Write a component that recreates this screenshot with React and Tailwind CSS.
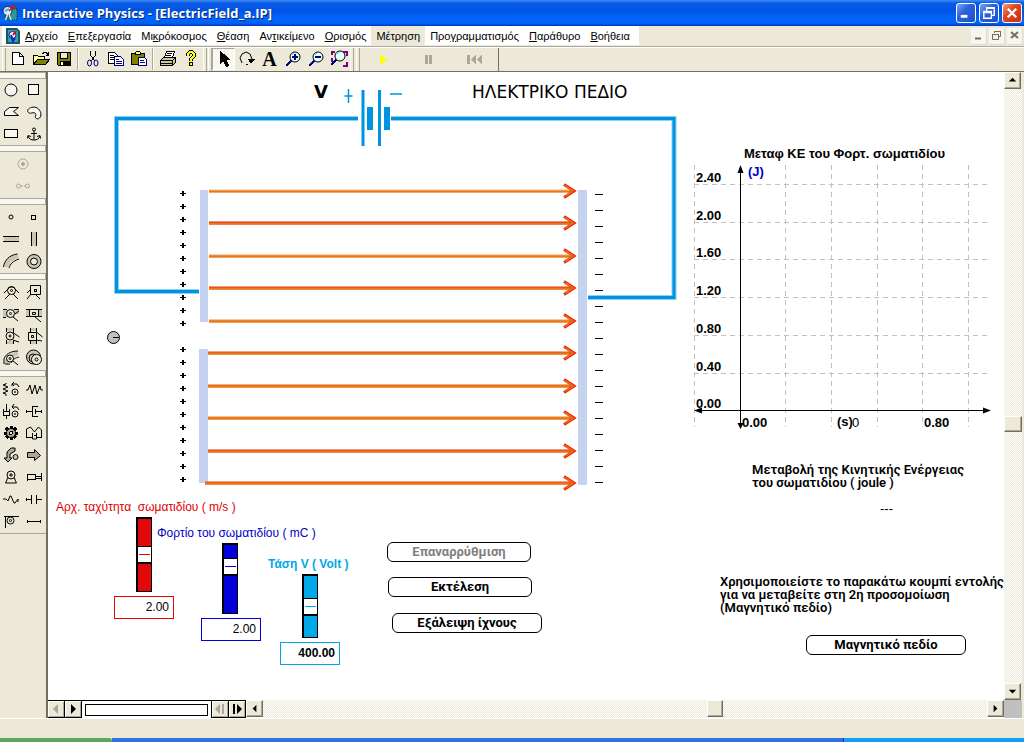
import React, { useState } from 'react';
import clsx from 'clsx';

// [before, access key, after]
const menuItems = [
    ['', 'Α', 'ρχείο'],
    ['', 'Ε', 'πεξεργασία'],
    ['Μι', 'κ', 'ρόκοσμος'],
    ['', 'Θ', 'έαση'],
    ['Αν', 'τ', 'ικείμενο'],
    ['', 'Ο', 'ρισμός'],
    ['Μέτρηση', '', ''],
    ['Προ', 'γ', 'ραμματισμός'],
    ['', 'Π', 'αράθυρο'],
    ['', 'Β', 'οήθεια'],
];

const checker = 'bg-[repeating-conic-gradient(#ffffff_0_25%,#ece9d8_0_50%)] bg-[length:2px_2px]';
const raised = 'bg-[#ece9d8] border border-t-white border-l-white border-r-[#716f64] border-b-[#716f64] shadow-[inset_-1px_-1px_0_#aca899]';

const Icon = ({ size = 20, children, color = '#000' }) => (
    <svg
        width={size}
        height={size}
        viewBox={`0 0 ${size} ${size}`}
        fill="none"
        stroke={color}
        shapeRendering="crispEdges"
        aria-hidden="true"
        className="shrink-0"
    >
        {children}
    </svg>
);

const AppLogo = () => (
    <svg width="16" height="16" viewBox="0 0 16 16" aria-hidden="true" className="shrink-0">
        <rect x="2" y="2" width="13" height="13" fill="#0d6a80" />
        <path d="M10 4h5v11H8" fill="#2e9a96" stroke="#062b3d" strokeDasharray="1 1" />
        <circle cx="5.500" cy="6" r="4.500" fill="#d8ecff" stroke="#0a2a5a" />
        <path d="M7 6l5-5M9 1h3v3" stroke="#e01010" strokeWidth="1.500" fill="none" />
        <path d="M5.500 10l-2 5M7 9l2 6" stroke="#d6e7ee" strokeWidth="1.500" />
        <path d="M3 6l4-2" stroke="#5fa0e8" strokeWidth="2" />
    </svg>
);

const DocLogo = () => (
    <svg width="14" height="16" viewBox="0 0 14 16" aria-hidden="true" className="shrink-0">
        <path d="M0 0h11l3 3v13H0z" fill="#0c5f66" />
        <path d="M1.500 1.500h9l2 2v11h-11z" fill="#3b9ea0" stroke="#053a44" strokeDasharray="1 1" />
        <circle cx="6.500" cy="7" r="3.500" fill="#f2f8ff" stroke="#0a22a8" />
        <path d="M7 7l3-4" stroke="#e01010" strokeWidth="2" />
        <path d="M5 7l2 6 2-3" stroke="#0a22c8" strokeWidth="2" fill="none" />
    </svg>
);

/* ---------- toolbar ---------- */

const lens = (
    <>
        <circle cx="11" cy="7" r="5" fill="#e6ffff" shapeRendering="auto" />
        <path d="M7 11l-5 5" stroke="#00007f" strokeWidth="2" />
        <path d="M8 5l2-2" stroke="#00ffff" />
    </>
);

const fileTools = [
    { name: 'New', icon: <path d="M4.500 3.500h7l4 4v8h-11zM11.500 3.500v4h4" fill="#fff" /> },
    {
        name: 'Open',
        icon: (
            <>
                <path d="M2.500 15.500v-9h4l1 1h6v3" fill="#ffff99" />
                <path d="M2.500 15.500l4-5h12l-4 5z" fill="#808000" />
                <path d="M11 4.500h1l1-1h2l2 2M17.500 3v3h-3" />
            </>
        ),
    },
    {
        name: 'Save',
        icon: (
            <>
                <path d="M3.500 3.500h13v13h-12l-1-1z" fill="#808000" />
                <path d="M6.500 3.500h7v6h-7z" fill="#ece9d8" />
                <path d="M6 12h9v4H6z" fill="#000" />
                <path d="M7.500 13v3" stroke="#fff" strokeWidth="2" />
            </>
        ),
    },
    null,
    {
        name: 'Cut',
        icon: (
            <>
                <path d="M7.500 2v4l4 6M12.500 2v4l-4 6" />
                <ellipse cx="6.500" cy="14" rx="2" ry="3" stroke="#00007f" shapeRendering="auto" />
                <ellipse cx="13" cy="14" rx="2" ry="3" stroke="#00007f" shapeRendering="auto" />
            </>
        ),
    },
    {
        name: 'Copy',
        icon: (
            <>
                <path d="M2.500 3.500h6l3 3v8h-9z" fill="#fff" />
                <path d="M4 6.500h4M4 8.500h5M4 10.500h5" />
                <path d="M8.500 7.500h6l3 3v6h-9z" fill="#fff" stroke="#00007f" />
                <path d="M10 10.500h3M10 12.500h6M10 14.500h6" stroke="#00007f" />
            </>
        ),
    },
    {
        name: 'Paste',
        icon: (
            <>
                <path d="M2.500 4.500h13v11h-13z" fill="#808000" />
                <path d="M6.500 5.500v-2l1-1h3l1 1v2z" fill="#ffff66" />
                <path d="M9.500 8.500h6l2 2v6h-8z" fill="#fff" stroke="#00007f" />
                <path d="M11 11.500h4M11 13.500h5" stroke="#00007f" />
            </>
        ),
    },
    null,
    {
        name: 'Print',
        icon: (
            <>
                <path d="M6.500 8.500l2-6h8l-2 6z" fill="#fff" />
                <path d="M9 4.500h5M8 6.500h5" />
                <path d="M2.500 11.500l3-3h12v5l-3 3h-12z" fill="#c9c6b4" />
                <path d="M2.500 11.500h12l3-3M14.500 11.500v5M3 14.500h11" />
                <path d="M10 13h3" stroke="#d8d800" strokeWidth="1" />
            </>
        ),
    },
    {
        name: 'Help',
        icon: (
            <>
                <path d="M7 7V5l2-2h2l2 2v2l-3 3v2" stroke="#000" strokeWidth="4" />
                <path d="M7 7V5l2-2h2l2 2v2l-3 3v2" stroke="#ffff00" strokeWidth="2" />
                <path d="M8.500 13.500h3v3h-3z" fill="#ffff00" />
            </>
        ),
    },
];

const canvasTools = [
    { name: 'Select', active: true, icon: <path d="M6.500 2.500v12l3-3 3 6 2-1-3-6h4z" fill="#000" /> },
    {
        name: 'Rotate',
        icon: (
            <>
                <path d="M5 14L3 9l2-4 4-2 4 2 2 5" shapeRendering="auto" />
                <path d="M11 10h7l-4 5z" fill="#000" stroke="none" />
                <path d="M9 15.500h2" />
            </>
        ),
    },
    { name: 'Text', label: 'A' },
    { name: 'Zoom in', icon: <g transform="translate(1 1)">{lens}<path d="M8 7h6M11 4v6" stroke="#00007f" strokeWidth="2" /></g> },
    { name: 'Zoom out', icon: <g transform="translate(1 1)">{lens}<path d="M8 7h6" stroke="#00007f" strokeWidth="2" /></g> },
    {
        name: 'Zoom to fit',
        icon: (
            <g>
                {lens}
                <path d="M3 6V3h3M14 3h4v4M18 13v4h-4M3 13V9" stroke="#7f007f" strokeWidth="2" />
            </g>
        ),
    },
];

const playerTools = [
    { name: 'Run', icon: <path d="M7 6v9l8-4.500z" fill="#ffff00" stroke="none" /> },
    { name: 'Pause', icon: <path d="M6 6h3v9H6zM10 6h3v9h-3z" fill="#aca899" stroke="none" /> },
    { name: 'Reset', icon: <path d="M2 6h3v9H2zM11 6v9l-5-4.500zM17 6v9l-5-4.500z" fill="#aca899" stroke="none" /> },
];

const Grip = () => <div className="w-1 self-stretch border-l border-r border-l-white border-r-[#aca899]" />;

const ToolButton = ({ tool, wide }) => (
    <button
        type="button"
        aria-label={tool.name}
        className={clsx(
            'flex h-[22px] items-center justify-center',
            wide ? 'w-[46px]' : 'w-[23px]',
            tool.active && 'border border-t-[#aca899] border-l-[#aca899] border-r-white border-b-white bg-[#f8f7f1]'
        )}
    >
        {tool.label ? (
            <span className="font-['Liberation_Serif',serif] text-xl leading-5 font-bold">{tool.label}</span>
        ) : (
            <Icon>{tool.icon}</Icon>
        )}
    </button>
);

const Toolbar = () => (
    <div className="flex h-[25px] items-start border-t border-b border-t-white border-b-[#716f64] pl-[2px]">
        <Grip />
        {fileTools.map((tool, i) =>
            tool ? (
                <ToolButton key={tool.name} tool={tool} />
            ) : (
                <div key={i} className="mx-[2px] h-[22px] w-[2px] border-l border-r border-l-[#aca899] border-r-white" />
            )
        )}
        <div className="ml-px flex gap-px self-stretch">
            <Grip />
            <Grip />
        </div>
        {canvasTools.map((tool) => (
            <ToolButton key={tool.name} tool={tool} />
        ))}
        <div className="flex gap-[2px] self-stretch">
            <Grip />
            <Grip />
        </div>
        <div className="flex self-stretch border-r border-r-[#716f64]">
            {playerTools.map((tool) => (
                <ToolButton key={tool.name} tool={tool} wide />
            ))}
        </div>
    </div>
);

/* ---------- left palette ---------- */

const grey = '#c9c6b8';

const palette = [
    {
        pad: '',
        tools: [
            ['Circle', <circle cx="10" cy="10" r="6" fill="#f8f7f1" shapeRendering="auto" />],
            ['Square', <path d="M4.500 4.500h10v10h-10z" fill="#f8f7f1" />],
            ['Polygon', <path d="M17.500 5.500h-9l-5 4v4h14l-5-4z" fill="#f8f7f1" shapeRendering="auto" />],
            ['Curved body', <path d="M7.500 11c-3 1-5-2-3-4s7-3 10 0 3 7 1 9-5 0-4-2 0-4-4-3z" fill="#f8f7f1" shapeRendering="auto" />],
            ['Rectangle', <path d="M3.500 5.500h13v8h-13z" fill="#f8f7f1" />],
            [
                'Anchor',
                <g shapeRendering="auto">
                    <circle cx="10" cy="5.500" r="1.500" />
                    <path d="M10 7v9M7 9.500h6M4 12c1 3 3 4 6 4s5-1 6-4M3.500 14.500l.500-3 3 1M16.500 14.500l-.500-3-3 1" />
                </g>,
            ],
        ],
    },
    {
        pad: 'py-px',
        single: true,
        tools: [
            [
                'Join',
                <g stroke="#aca899" shapeRendering="auto">
                    <circle cx="10" cy="10" r="5" />
                    <circle cx="10" cy="10" r="1.500" fill="#aca899" />
                </g>,
            ],
            [
                'Split',
                <g stroke="#aca899" shapeRendering="auto">
                    <circle cx="5.500" cy="10" r="2" />
                    <circle cx="14.500" cy="10" r="2" />
                    <path d="M8 10h5" strokeDasharray="2 1" />
                </g>,
            ],
        ],
    },
    {
        pad: 'py-px',
        tools: [
            ['Point element', <circle cx="10" cy="10" r="2" shapeRendering="auto" />],
            ['Square point', <path d="M7.500 8.500h4v4h-4z" />],
            ['Horizontal slot', <><path d="M3 8h15v4H3z" fill={grey} stroke="none" /><path d="M2 7.500h16M2 12.500h16" /></>],
            ['Vertical slot', <><path d="M8 3h4v14H8z" fill={grey} stroke="none" /><path d="M7.500 3v14M12.500 3v14" /></>],
            [
                'Curved slot',
                <g shapeRendering="auto">
                    <path d="M5 16c1-6 5-9 12-11" stroke={grey} strokeWidth="4" />
                    <path d="M2.500 16c1-7 6-12 14-13M8 17c1-4 4-7 10-9" />
                </g>,
            ],
            [
                'Closed slot',
                <g shapeRendering="auto">
                    <circle cx="10" cy="10.500" r="7" fill={grey} />
                    <circle cx="10" cy="10.500" r="3.500" fill="#ece9d8" />
                </g>,
            ],
        ],
    },
    {
        pad: 'py-px',
        tools: [
            ['Pin joint', <g shapeRendering="auto"><path d="M3 11L9 5h3l6 6M9 12l-5 5M12 12l5 5" /><circle cx="10.500" cy="8.500" r="4" /><circle cx="10.500" cy="8.500" r="1" /></g>],
            ['Rigid joint', <g><path d="M6.500 3.500h10v9h-10zM3 11l3-3M7 12l-4 5M11 12l5 5" shapeRendering="auto" /><path d="M10.500 7.500h2v2h-2z" /></g>],
            ['Pin on slot', <g shapeRendering="auto"><path d="M2 6h4v7H2zM14 6h4v4h-4z" fill={grey} stroke="none" /><path d="M2 5.500h4M13 5.500h5M2 13.500h3M12 13l5 4M14 10l4-3" /><circle cx="9.500" cy="9.500" r="4" /><circle cx="9.500" cy="9.500" r="1" /></g>],
            ['Keyed slot', <g><path d="M2 6h4v6H2zM15 6h3v6h-3z" fill={grey} stroke="none" /><path d="M2 5.500h16M2 12.500h3M5.500 5.500h9v7h-9zM8.500 8.500h3v2h-3zM11 13l6 5M15 12.500h3" shapeRendering="auto" /></g>],
            ['Pin on vertical slot', <g shapeRendering="auto"><path d="M6 2h6v3H6zM6 15h6v3H6z" fill={grey} stroke="none" /><path d="M5.500 2v4M12.500 2v5l6 4M5.500 14v4M12.500 14v4M12 14l6 2" /><circle cx="9" cy="10" r="4" /><circle cx="9" cy="10" r="1" /></g>],
            ['Keyed vertical slot', <g><path d="M7 2h5v3H7zM7 15h5v3H7z" fill={grey} stroke="none" /><path d="M6.500 2v4M12.500 2v4l6 5M6.500 15v3M12.500 15v3M12 14l6 1M4.500 6.500h8v8h-8zM7.500 9.500h2v2h-2z" shapeRendering="auto" /></g>],
            ['Curved slot joint', <g shapeRendering="auto"><path d="M5 16c1-6 5-9 12-11" stroke={grey} strokeWidth="4" /><path d="M3 16v-5c1-4 6-8 14-8M10 15c2-4 4-5 8-6M12 13l5 4M4 16h5" /><circle cx="9" cy="10.500" r="3.500" fill="#ece9d8" /><circle cx="9" cy="10.500" r="1" /></g>],
            ['Closed slot joint', <g shapeRendering="auto"><circle cx="9.500" cy="9" r="7" fill={grey} /><circle cx="9" cy="10" r="4" /><circle cx="12.500" cy="11.500" r="5" fill="#ece9d8" /><circle cx="12.500" cy="11.500" r="1.500" /></g>],
        ],
    },
    {
        pad: 'py-px',
        tools: [
            ['Rotational spring', <g shapeRendering="auto"><path d="M5 4v1l-3 1 5 2-5 2 5 2-5 2 3 1v2M11 7V5h5l2 3M13 3l-2 2 2 2" /><circle cx="14" cy="13" r="3" /><circle cx="14" cy="13" r=".500" /></g>],
            ['Spring', <path d="M2 11h2l2-5 2 9 3-9 2 9 3-8 1 4h2" shapeRendering="auto" />],
            ['Rotational damper', <g><path d="M2.500 8v6h6V8M5.500 3v7M3 10.500h5M5.500 14v4" /><g shapeRendering="auto"><path d="M11 6h5l2 3M13 3l-2 3 2 2" /><circle cx="14" cy="13" r="3" /><circle cx="14" cy="13" r=".500" /></g></g>],
            ['Damper', <path d="M3 10.500h5M14 10.500h4M13.500 5.500h-5v10h5M11.500 8v5M12 10.500h2M2.500 9v3M17.500 9v3" />],
            ['Gear', <g><path d="M10 3v14M3 10h14M5 5l10 10M15 5L5 15" strokeWidth="3" /><circle cx="10" cy="10" r="4.500" fill="#aca899" shapeRendering="auto" /><circle cx="10" cy="10" r="1.500" fill="#ece9d8" /></g>],
            ['Spring damper', <path d="M2.500 15V6l4-2 4 5 4-5 3 3v8M2 14.500h6M13 14.500h5M8.500 10v6h4v-6M10 12.500h2" shapeRendering="auto" />],
            ['Torque', <g shapeRendering="auto"><path d="M14 3h-4L6 7v6H3l4 4 4-4H9V9l5-3z" fill="#aca899" /><circle cx="14.500" cy="12" r="2.500" fill="#c9c6b8" /></g>],
            ['Force', <path d="M3.500 7.500h7v-3l6 6-6 5v-3h-7z" fill="#aca899" shapeRendering="auto" />],
            ['Motor', <g shapeRendering="auto"><circle cx="10" cy="8" r="4" /><path d="M10 6v4M8 8h4M6.500 11l-1 3-1 2h11l-1-2-1-3" /></g>],
            ['Actuator', <path d="M3.500 6.500v7M3.500 7.500h8v5h-8M11.500 9.500h6M11.500 11.500h6M17.500 6v8" strokeWidth="1" />],
            ['Rod', <path d="M2 10h3l2 2 2-5h1l3 7h1l3-4v3" shapeRendering="auto" />],
            ['Separator', <path d="M2 10.500h5M13 10.500h5M7.500 6v9M12.500 6v9M2.500 9v3" />],
            ['Pulley', <g shapeRendering="auto"><path d="M3 5.500h15M4.500 5v12" /><circle cx="9.500" cy="9.500" r="3.500" /><circle cx="9.500" cy="9.500" r="1" /></g>],
            ['Rope', <path d="M3 10.500h14M3.500 9v3M16.500 9v3" />],
        ],
    },
];

const Palette = () => (
    <div className="w-12 shrink-0 border-r-2 border-r-[#716f64] bg-[#ece9d8]">
        {palette.map((section, i) => (
            <div key={i}>
                <div className="h-[7px] border-t border-r border-b border-[#aca899] bg-[#f8f7f1]" />
                <div className={clsx('grid pr-px', section.single ? 'grid-cols-1' : 'grid-cols-2', section.pad)}>
                    {section.tools.map(([name, drawing]) => (
                        <button key={name} type="button" aria-label={name} className="flex h-[22px] items-center justify-center">
                            <Icon>{drawing}</Icon>
                        </button>
                    ))}
                </div>
            </div>
        ))}
        <div className="border-t border-t-[#aca899]" />
    </div>
);

/* ---------- canvas drawings ---------- */

const arrowEdges = ['#f8c08a', '#e02010', '#f0a060', '#e83808', '#f09040', '#e85010', '#e86010', '#f08020', '#e83010', '#f04808'];

const Wire = ({ d }) => (
    <>
        <path d={d} stroke="#8fd0f2" strokeWidth="5" />
        <path d={d} stroke="#0094e0" strokeWidth="3" />
    </>
);

const FieldDrawing = () => (
    <svg
        width="640"
        height="420"
        viewBox="50 80 640 420"
        fill="none"
        aria-hidden="true"
        className="absolute top-2 left-[2px]"
    >
        <Wire d="M358 118.500H116.500V291.500H199" />
        <Wire d="M391 118.500H674V297.500H588" />
        <g stroke="#0094e0">
            <path d="M363 90v56M379.500 90v56" strokeWidth="3" />
            <path d="M370 107v23M387 107v23" strokeWidth="6" />
            <path d="M344.500 96h8M348.500 89v14M390 94h12" strokeWidth="1.500" />
        </g>
        <g fill="#c3d3f0">
            <path d="M200 190h8v132h-8zM199 349h9v134h-9zM578 190h9v295h-9z" />
        </g>
        {arrowEdges.map((edge, i) => {
            const y = Math.floor(191 + i * 32.5);
            const start = i === 9 ? 205 : i > 4 ? 208 : 209;
            return (
                <g key={i}>
                    <path d={`M${start} ${y}H573`} stroke={edge} strokeWidth="3" />
                    <path d={`M${start} ${y + 0.5}H573`} stroke="#e87818" strokeWidth="2" />
                    <path d={`M564 ${y - 6.5}L574 ${y}L564 ${y + 6.5}`} stroke="#f02800" strokeWidth="3" />
                    <path d={`M565 ${y - 5.5}L573 ${y}L565 ${y + 5.5}`} stroke="#e87818" strokeWidth="1.500" />
                </g>
            );
        })}
        <g stroke="#000" shapeRendering="crispEdges">
            {Array.from({ length: 22 }, (_, i) => {
                const y = 193 + i * 13 + (i > 10 ? 13 : 0);
                return (
                    <g key={i}>
                        <path d={`M180 ${y + 0.5}h6`} />
                        <path d={`M183 ${y - 2}v5`} strokeWidth="2" />
                    </g>
                );
            })}
            {Array.from({ length: 19 }, (_, i) => (
                <path key={i} d={`M595 ${194.5 + i * 16}h8`} />
            ))}
        </g>
        <circle cx="113.500" cy="337.500" r="6" fill="#c0c0c0" stroke="#000" />
        <path d="M113 337.500h6" stroke="#000" />
    </svg>
);

const energyTicks = ['2.40', '2.00', '1.60', '1.20', '0.80', '0.40', '0.00'];
const timeGrid = [694.5, 785.5, 831.5, 877.5, 922.5, 968.5];

const EnergyChart = () => (
    <svg
        width="306"
        height="290"
        viewBox="690 144 306 290"
        fill="none"
        aria-label="Kinetic energy chart"
        className="absolute top-[72px] left-[642px] text-[13px] font-bold"
    >
        <g stroke="#c0c0c0" strokeDasharray="5 4" shapeRendering="crispEdges">
            {timeGrid.map((x) => (
                <path key={x} d={`M${x} 165V427`} />
            ))}
            {energyTicks.slice(0, 6).map((tick, i) => (
                <path key={tick} d={`M694 ${Math.round(184 + i * 37.7) + 0.5}H991`} />
            ))}
        </g>
        <path d="M740.500 168V427M697 410.500H989" stroke="#000" shapeRendering="crispEdges" />
        <path d="M740.500 165l3 8h-6zM740.500 429l3-6h-6zM991 410.500l-8-3v6zM694 410.500l8-3v6z" fill="#000" />
        <g fill="#000">
            <text x="744" y="158">Μεταφ ΚΕ του Φορτ. σωματιδίου</text>
            {energyTicks.map((tick, i) => (
                <text key={tick} x="696" y={Math.round(182 + i * 37.7)}>{tick}</text>
            ))}
            <text x="742" y="427">0.00</text>
            <text x="837" y="426">(s)</text>
            <text x="852" y="427" className="font-normal">0</text>
            <text x="924" y="427">0.80</text>
            <text x="748" y="176" fill="#0000d0">(J)</text>
        </g>
    </svg>
);

const controls = [
    {
        id: 'velocity',
        label: 'Αρχ. ταχύτητα  σωματιδίου ( m/s )',
        min: 0,
        max: 4,
        initial: 2,
        labelStyle: 'left-2 top-[427px] text-[#e00000]',
        sliderStyle:
            'left-[88px] top-[445px] h-[75px] bg-[#e00808] [&::-webkit-slider-thumb]:bg-[linear-gradient(#e00808,#e00808)]',
        fieldStyle: 'left-[66px] top-[524px] border-[#e00808]',
    },
    {
        id: 'charge',
        label: 'Φορτίο του σωματιδίου ( mC )',
        min: -1,
        max: 3,
        initial: 2,
        labelStyle: 'left-[109px] top-[453px] text-[#0000c8]',
        sliderStyle:
            'left-[174px] top-[471px] h-[71px] bg-[#0000d8] [&::-webkit-slider-thumb]:bg-[linear-gradient(#0000d8,#0000d8)]',
        fieldStyle: 'left-[153px] top-[546px] border-[#0000d8]',
    },
    {
        id: 'voltage',
        label: 'Τάση V ( Volt )',
        min: 0,
        max: 800,
        initial: 400,
        labelStyle: 'left-[220px] top-[484px] font-bold text-[#00a8e8]',
        sliderStyle:
            'left-[254px] top-[502px] h-[64px] bg-[#00a8e8] [&::-webkit-slider-thumb]:bg-[linear-gradient(#00a8e8,#00a8e8)]',
        fieldStyle: 'left-[232px] top-[570px] border-[#00a8e8] font-bold',
    },
];

const SliderControl = ({ control }) => {
    const [value, setValue] = useState(control.initial);
    return (
        <>
            <label htmlFor={control.id} className={clsx('absolute text-xs leading-4 whitespace-pre', control.labelStyle)}>
                {control.label}
            </label>
            <input
                id={control.id}
                type="range"
                min={control.min}
                max={control.max}
                step="any"
                value={value}
                onChange={(e) => setValue(parseFloat(e.target.value))}
                className={clsx(
                    'absolute w-4 appearance-none border border-t-2 border-l-2 border-black [direction:rtl] [writing-mode:vertical-lr]',
                    '[&::-webkit-slider-thumb]:h-[18px] [&::-webkit-slider-thumb]:w-[13px] [&::-webkit-slider-thumb]:appearance-none',
                    '[&::-webkit-slider-thumb]:border-t [&::-webkit-slider-thumb]:border-b-2 [&::-webkit-slider-thumb]:border-black',
                    '[&::-webkit-slider-thumb]:bg-white [&::-webkit-slider-thumb]:bg-[length:11px_1px] [&::-webkit-slider-thumb]:bg-center [&::-webkit-slider-thumb]:bg-no-repeat',
                    control.sliderStyle
                )}
            />
            <input
                type="text"
                aria-label={control.label}
                value={value.toFixed(2)}
                onChange={(e) => setValue(parseFloat(e.target.value) || 0)}
                className={clsx('absolute h-[23px] w-[60px] border bg-white pr-1 pb-[2px] text-right text-xs text-black', control.fieldStyle)}
            />
        </>
    );
};

const CanvasButton = ({ className, children, ...props }) => (
    <button
        type="button"
        className={clsx(
            'absolute h-5 rounded-md border border-black bg-white font-[Roboto,sans-serif] text-[13px] leading-4 font-bold disabled:text-[#808080]',
            className
        )}
        {...props}
    >
        {children}
    </button>
);

const Canvas = () => (
    <div className="relative min-h-[628px] min-w-0 flex-1 overflow-hidden bg-white font-['Liberation_Sans',sans-serif] text-black">
        <FieldDrawing />
        <div className="absolute top-2 left-[266px] font-['DejaVu_Sans',sans-serif] text-lg leading-6 font-bold">V</div>
        <h1 className="absolute top-2 left-[424px] font-['DejaVu_Sans',sans-serif] text-[17px] leading-6 whitespace-nowrap">
            ΗΛΕΚΤΡΙΚΟ ΠΕΔΙΟ
        </h1>
        <EnergyChart />

        {controls.map((control) => (
            <SliderControl key={control.id} control={control} />
        ))}

        <CanvasButton className="top-[470px] left-[339px] w-36" disabled>Επαναρρύθμιση</CanvasButton>
        <CanvasButton className="top-[505px] left-[340px] w-36">Εκτέλεση</CanvasButton>
        <CanvasButton className="top-[541px] left-[344px] w-[150px]">Εξάλειψη ίχνους</CanvasButton>

        <p className="absolute top-[391px] left-[704px] font-[Roboto,sans-serif] text-[13px] leading-[13px] font-semibold whitespace-nowrap">
            Μεταβολή της Κινητικής Ενέργειας
            <br />
            του σωματιδίου ( joule )
        </p>
        <output className="absolute top-[430px] left-[832px] text-[13px] leading-[13px]">---</output>
        <p className="absolute top-[503px] left-[672px] font-[Roboto,sans-serif] text-[13px] leading-[13px] font-semibold whitespace-nowrap">
            Χρησιμοποιείστε το παρακάτω κουμπί εντολής
            <br />
            για να μεταβείτε στη 2η προσομοίωση
            <br />
            (Μαγνητικό πεδίο)
        </p>
        <CanvasButton className="top-[563px] left-[758px] w-40">Μαγνητικό πεδίο</CanvasButton>
    </div>
);

/* ---------- scroll bars ---------- */

const arrowPaths = {
    up: 'M8 5l4 4H4z',
    down: 'M4 6h8l-4 4z',
    left: 'M10 4v8L6 8z',
    right: 'M6 4v8l4-4z',
};

const ScrollArrow = ({ dir }) => (
    <button type="button" aria-label={`Scroll ${dir}`} className={clsx('flex size-[17px] shrink-0 items-center justify-center', raised)}>
        <svg width="15" height="15" viewBox="0 0 16 16" aria-hidden="true">
            <path d={arrowPaths[dir]} />
        </svg>
    </button>
);

const frameSteps = {
    back: <path d="M10 3v10L5 8z" />,
    forward: <path d="M6 3v10l5-5z" />,
    first: <path d="M8 3v10L3 8zM10 3h2v10h-2z" />,
    last: <path d="M4 3h2v10H4zM8 3v10l5-5z" />,
};

const FrameButton = ({ step, disabled }) => (
    <button
        type="button"
        aria-label={`Frame ${step}`}
        disabled={disabled}
        className="flex h-[18px] w-[17px] items-center justify-center border-t border-r border-b border-black bg-[#ece9d8] text-black shadow-[inset_1px_1px_0_#fff,inset_-1px_-1px_0_#aca899] disabled:text-[#aca899]"
    >
        <svg width="16" height="16" viewBox="0 0 16 16" fill="currentColor" aria-hidden="true">
            {frameSteps[step]}
        </svg>
    </button>
);

const BottomBar = () => (
    <div className="flex h-[18px] bg-white">
        <FrameButton step="back" disabled />
        <FrameButton step="forward" />
        <div className="flex w-[130px] items-center justify-center border-t border-r border-black">
            <div className="h-3 w-[123px] border border-black" />
        </div>
        <FrameButton step="first" disabled />
        <FrameButton step="last" />
        <ScrollArrow dir="left" />
        <div className={clsx('flex flex-1', checker)}>
            <div className="flex-[444]" />
            <div className={clsx('h-[17px] w-4', raised)} />
            <div className="flex-[264]" />
        </div>
        <ScrollArrow dir="right" />
    </div>
);

const VerticalScroll = () => (
    <div className="flex w-5 shrink-0 flex-col pr-[2px]">
        <ScrollArrow dir="up" />
        <div className={clsx('flex flex-1 flex-col', checker)}>
            <div className="flex-[327]" />
            <div className={clsx('h-4 w-[18px]', raised)} />
            <div className="flex-[251]" />
        </div>
        <ScrollArrow dir="down" />
        <div className="h-[18px] bg-[#c0c0c0]" />
    </div>
);

/* ---------- window chrome ---------- */

const windowIcons = {
    minimize: <path d="M4 13h7" strokeWidth="3" />,
    restore: <path d="M7 7V4h8v8h-3M7 4.500h8M4 8h8v7H4zM4 9h8" strokeWidth="1.500" />,
    close: <path d="M5 5l9 9M14 5l-9 9" strokeWidth="2.500" />,
};

const TitleBar = () => (
    <header className="flex h-[26px] items-center gap-[3px] bg-[linear-gradient(#3f8cf3_0%,#0a5be6_12%,#0054e3_40%,#0066ff_75%,#0060f4_90%,#0038b8_100%)] pr-[2px] pl-[2px]">
        <AppLogo />
        <h2 className="ml-px flex-1 font-['Open_Sans',sans-serif] text-[13px] leading-5 font-bold whitespace-nowrap text-white [text-shadow:1px_1px_0_#0a246a]">
            Interactive Physics - [ElectricField_a.IP]
        </h2>
        {Object.keys(windowIcons).map((name) => (
            <button
                key={name}
                type="button"
                aria-label={name}
                className={clsx(
                    'flex size-5 items-center justify-center rounded-[3px] border border-white',
                    name === 'close'
                        ? 'bg-[linear-gradient(135deg,#f0a080,#e04820_40%,#c83010)]'
                        : 'bg-[linear-gradient(135deg,#7aa8f8,#2c62dc_40%,#1c50c8)]'
                )}
            >
                <svg width="18" height="18" viewBox="0 0 19 19" fill="none" stroke="#fff" aria-hidden="true">
                    {windowIcons[name]}
                </svg>
            </button>
        ))}
    </header>
);

const mdiIcons = {
    minimize: <path d="M4 10.500h6" strokeWidth="2" />,
    restore: <path d="M5.500 5V3.500h6v5H10M5 3.500h7M3.500 6.500h6v5h-6zM3 6.500h7" />,
    close: <path d="M4 4l7 6M11 4l-7 6" strokeWidth="2" />,
};

const MenuBar = () => (
    <nav className="flex h-[21px] border-b border-b-[#aca899] pr-[2px] pb-px pl-[2px]">
        <div className="flex items-center bg-white pr-1 pl-1">
            <DocLogo />
            {menuItems.map(([before, key, after]) => (
                <button
                    key={before + key + after}
                    type="button"
                    className={clsx(
                        "h-full px-[5px] font-['Liberation_Sans',sans-serif] text-[11px] leading-4 whitespace-nowrap",
                        before === 'Μέτρηση' && 'bg-[#ece9d8]'
                    )}
                >
                    {before}
                    <span className="underline">{key}</span>
                    {after}
                </button>
            ))}
        </div>
        <div className="flex-1" />
        <div className="flex items-center gap-[3px]">
            {Object.keys(mdiIcons).map((name) => (
                <button key={name} type="button" aria-label={`${name} document`} className="h-4 w-[15px] bg-[#f6f5ee] shadow-[1px_1px_0_#dedbc8]">
                    <svg width="15" height="15" viewBox="0 0 15 15" fill="none" stroke="#716f64" aria-hidden="true">
                        {mdiIcons[name]}
                    </svg>
                </button>
            ))}
        </div>
    </nav>
);

export default function App() {
    return (
        <div className="flex min-h-screen flex-col bg-[#ece9d8] text-black">
            <TitleBar />
            <MenuBar />
            <Toolbar />
            <main className="flex flex-1">
                <Palette />
                <div className="flex min-w-0 flex-1 flex-col">
                    <Canvas />
                    <BottomBar />
                </div>
                <VerticalScroll />
            </main>
            <footer>
                <div className="h-5 border-t border-t-white" />
                <div className="flex h-1">
                    <div className="w-28 rounded-tr-[3px] bg-[#5ca85c]" />
                    <div className="flex-[732] bg-[#2f74e4]" />
                    <div className="flex-[180] border-l border-l-[#0a3a9a] bg-[#14a0f0]" />
                </div>
            </footer>
        </div>
    );
}
